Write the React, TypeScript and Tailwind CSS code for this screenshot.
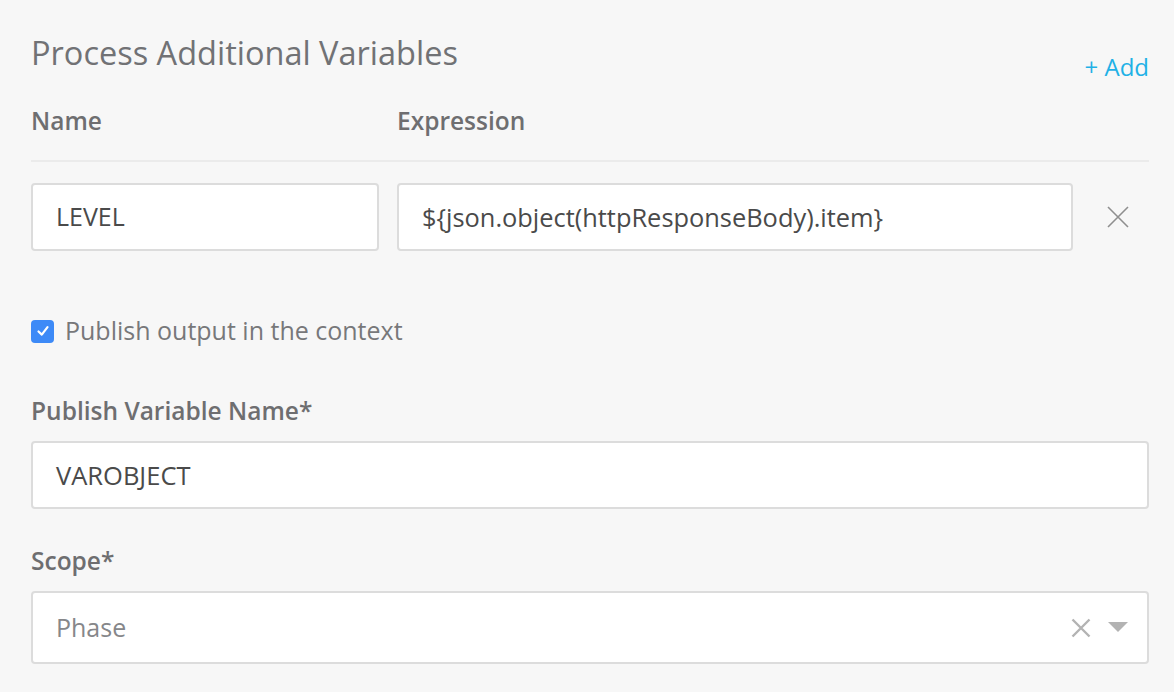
export default function App() {
  const font = { fontFamily: '"Open Sans", "Liberation Sans", sans-serif' };

  return (
    <div className="min-h-[692px] w-full bg-[#f7f7f7] pl-[31px] pr-[25px] pt-[33px]" style={font}>
      {/* Header */}
      <div className="flex items-start justify-between">
        <h2 className="h-[40px] text-[32.5px] leading-[40px] font-normal text-[#717275]">
          Process Additional Variables
        </h2>
        <button className="mt-[18px] text-[24px] leading-[32px] text-[#1fb1e6]">+ Add</button>
      </div>

      {/* Table header */}
      <div className="mt-[22px] grid grid-cols-[348px_676px_1fr] gap-x-[18px] text-[24.5px] leading-[32px] font-semibold text-[#6e6e70]">
        <div>Name</div>
        <div>Expression</div>
      </div>
      <div className="mt-[23px] h-[2px] bg-[#ebebeb]" />

      {/* Variable row */}
      <div className="mt-[21px] grid grid-cols-[348px_676px_1fr] gap-x-[18px]">
        <div className="flex h-[68px] items-center rounded-[4px] border-2 border-[#dcdcdc] bg-white pl-[23px] text-[25px] text-[#4a4a4a]">
          LEVEL
        </div>
        <div className="flex h-[68px] items-center rounded-[4px] border-2 border-[#dcdcdc] bg-white pl-[23px] text-[25.4px] text-[#4a4a4a]">
          {'${json.object(httpResponseBody).item}'}
        </div>
        <div className="flex items-center pl-[16px]">
          <svg width="22" height="22" viewBox="0 0 22 22" fill="none" stroke="#8f8f8f" strokeWidth="1.6">
            <path d="M1 1 L21 21 M21 1 L1 21" />
          </svg>
        </div>
      </div>

      {/* Publish checkbox */}
      <label className="mt-[64px] flex h-[32px] items-center gap-[11px]">
        <span className="flex h-[23px] w-[23px] items-center justify-center rounded-[4px] bg-[#3d8af7]">
          <svg width="14" height="14" viewBox="0 0 14 14" fill="none" stroke="white" strokeWidth="2.2" strokeLinecap="round" strokeLinejoin="round">
            <path d="M2.5 7.5 L5.8 10.6 L11.5 3.2" />
          </svg>
        </span>
        <span className="text-[25px] text-[#77787a]">Publish output in the context</span>
      </label>

      {/* Publish Variable Name */}
      <div className="mt-[48px] text-[24.5px] leading-[32px] font-semibold text-[#6e6e70]">Publish Variable Name*</div>
      <div className="mt-[14px] flex h-[68px] items-center rounded-[4px] border-2 border-[#dcdcdc] bg-white pl-[23px] text-[25.5px] text-[#4a4a4a]">
        VAROBJECT
      </div>

      {/* Scope */}
      <div className="mt-[36px] text-[24.5px] leading-[32px] font-semibold text-[#6e6e70]">Scope*</div>
      <div className="mt-[14px] flex h-[73px] items-center rounded-[4px] border-2 border-[#dcdcdc] bg-white pl-[23px] pr-[19px] text-[25px]">
        <span className="flex-1 text-[#86878a]">Phase</span>
        <svg width="20" height="20" viewBox="0 0 20 20" fill="none" stroke="#b3b3b3" strokeWidth="2.4">
          <path d="M1.5 1.5 L18.5 18.5 M18.5 1.5 L1.5 18.5" />
        </svg>
        <svg className="ml-[17px]" width="20" height="11" viewBox="0 0 20 11" fill="#b3b3b3">
          <path d="M0 0 H20 L10 10 Z" />
        </svg>
      </div>
    </div>
  );
}
